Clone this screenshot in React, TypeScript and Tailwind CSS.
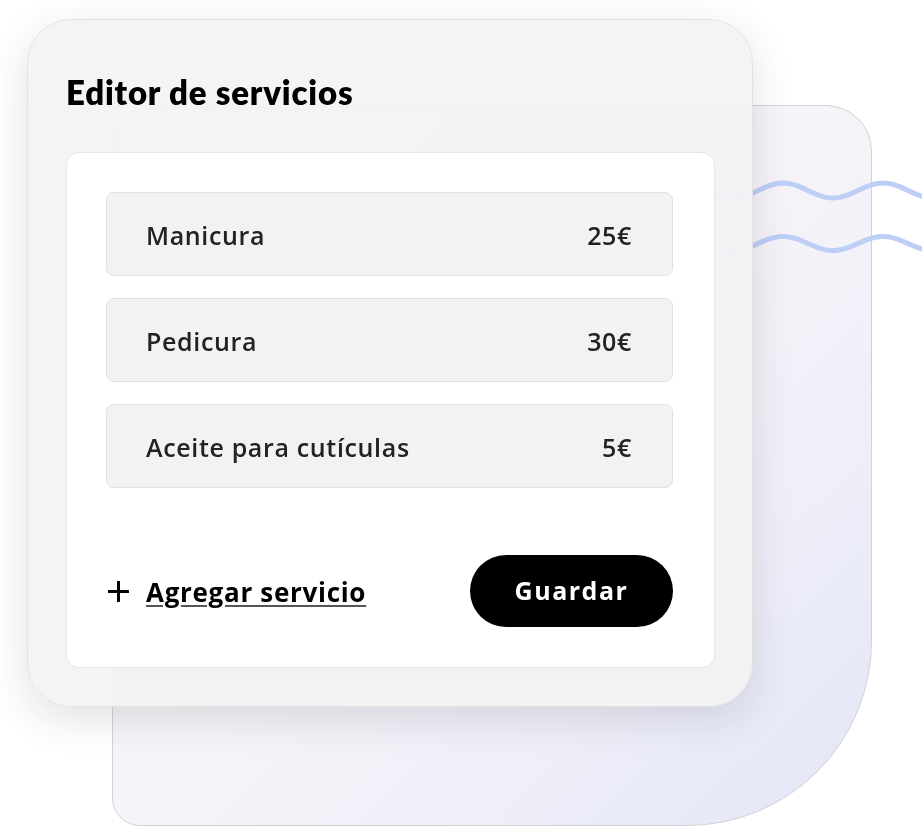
import React from "react";

const services = [
  { name: "Manicura", price: "25€" },
  { name: "Pedicura", price: "30€" },
  { name: "Aceite para cutículas", price: "5€" },
];

function wavePath(cy: number, amp: number) {
  // sine wave, peaks at x=83 and x=183 (local coords)
  const pts: string[] = [];
  for (let x = 0; x <= 240; x += 4) {
    const y = cy - amp * Math.cos((2 * Math.PI * (x - 83)) / 100);
    pts.push(`${x === 0 ? "M" : "L"}${x},${y.toFixed(2)}`);
  }
  return pts.join(" ");
}

export default function App() {
  return (
    <div className="relative h-[826px] w-[922px] overflow-hidden bg-white">
      {/* back shape */}
      <div className="absolute left-[112px] top-[105px] h-[721px] w-[760px] rounded-bl-[28px] rounded-br-[185px] rounded-tl-[24px] rounded-tr-[46px] border border-[#d2d2d6] bg-[linear-gradient(135deg,#fbf9f9_0%,#f6f4f8_50%,#eeeef9_75%,#e2e5f8_100%)]" />

      {/* waves */}
      <svg
        className="absolute left-[700px] top-[170px]"
        width="222"
        height="100"
        viewBox="0 0 222 100"
        fill="none"
      >
        <path d={wavePath(20.5, 7.5)} stroke="#bdcef7" strokeWidth="5" strokeLinecap="round" />
        <path d={wavePath(73.5, 7)} stroke="#bdcef7" strokeWidth="5" strokeLinecap="round" />
      </svg>

      {/* front card */}
      <div
        className="relative ml-[27px] mt-[19px] flex h-[688px] w-[726px] flex-col rounded-[44px] border border-[#e2e2e2] bg-[#f3f3f3]/90 pl-[38px] pr-[37px] shadow-[0_12px_40px_rgba(40,40,60,0.14)] backdrop-blur-[3px]"
        style={{ fontFamily: "'Open Sans', 'Liberation Sans', sans-serif" }}
      >
        <h1
          className="mt-[54px] text-[33px] font-extrabold leading-[36px] tracking-[0.8px] text-black"
          style={{ fontFamily: "Lato, 'Liberation Sans', sans-serif" }}
        >
          Editor de servicios
        </h1>

        <div className="mt-[42px] flex h-[516px] flex-col rounded-[13px] border border-[#e6e6e6] bg-white pl-[39px] pr-[41px] pt-[39px]">
          <div className="flex flex-col gap-[22px]">
            {services.map((s) => (
              <div
                key={s.name}
                className="flex h-[84px] items-center justify-between rounded-[8px] border border-[#e1e1e1] bg-[#f2f2f2] pl-[39px] pr-[40px] pt-[3px] text-[25px] font-[540] tracking-[0.65px] text-[#222]"
              >
                <span>{s.name}</span>
                <span>{s.price}</span>
              </div>
            ))}
          </div>

          <div className="mt-[67px] flex items-center justify-between">
            <button type="button" className="flex items-center gap-[17px] pl-[2px] text-black">
              <svg width="21" height="21" viewBox="0 0 21 21" fill="none">
                <path d="M10.5 1v19M1 10.5h19" stroke="#000" strokeWidth="3" strokeLinecap="round" />
              </svg>
              <span className="pt-[2px] text-[26px] font-bold tracking-[0.7px] underline decoration-[#555] decoration-[1.5px] underline-offset-[3px]">
                Agregar servicio
              </span>
            </button>
            <button
              type="button"
              className="flex h-[72px] w-[203px] items-center justify-center rounded-full bg-black text-[25px] font-bold tracking-[1.5px] text-white"
            >
              Guardar
            </button>
          </div>
        </div>
      </div>
    </div>
  );
}
